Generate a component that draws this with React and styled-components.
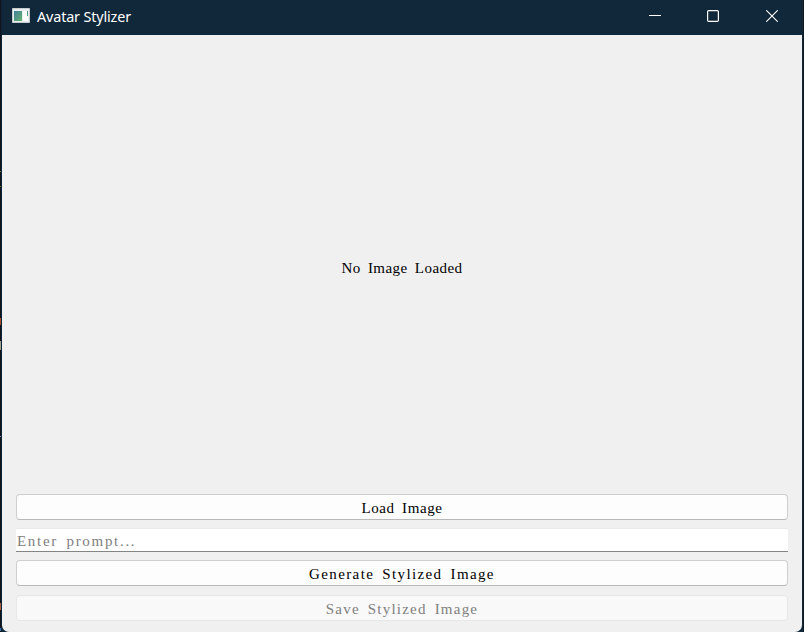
import React from "react";
import styled, { createGlobalStyle } from "styled-components";

const Global = createGlobalStyle`
  * { box-sizing: border-box; }
  html, body { margin: 0; overflow: hidden; }
  body { background: #11181f; }
`;

const Desktop = styled.div`
  position: relative;
  width: 804px;
  height: 632px;
  padding: 0 2px;
  background: linear-gradient(to right, #11151b 1px, #0c2436 1px 2px, #11283b 2px 803px, #101820 803px);
`;

const Speck = styled.i`
  position: absolute;
  left: 0;
  top: ${(p) => p.$top}px;
  width: 1px;
  height: ${(p) => p.$height}px;
  background: ${(p) => p.$color};
`;

const Window = styled.main`
  display: flex;
  flex-direction: column;
  width: 800px;
  height: 632px;
  overflow: hidden;
  background: #f0f0f0;
  border-radius: 0 0 7px 7px;
`;

const TitleBar = styled.header`
  display: flex;
  flex: none;
  align-items: center;
  height: 35px;
  padding-left: 9px;
  background: #11283b;
`;

const Title = styled.h1`
  flex: 1;
  margin: 0 0 2px 7px;
  color: #fff;
  font: 400 14.4px/20px "Noto Sans", "Open Sans", sans-serif;
  letter-spacing: -0.15px;
  white-space: nowrap;
`;

const AppIcon = styled.svg`
  display: block;
  margin-bottom: 4px;
`;

const Control = styled.button`
  display: flex;
  align-items: center;
  justify-content: center;
  width: ${(p) => p.$width || 58}px;
  height: 35px;
  padding: 0 0 3px;
  border: 0;
  background: none;
`;

const Preview = styled.section`
  display: flex;
  flex: none;
  align-items: center;
  justify-content: center;
  height: 459px;
  padding-top: 6px;
`;

const Label = styled.span`
  color: ${(p) => p.$color || "#000"};
  font: 15px/18px "Liberation Serif", serif;
  letter-spacing: ${(p) => p.$spacing}px;
  word-spacing: 3px;
  white-space: pre;
`;

const Form = styled.section`
  display: flex;
  flex-direction: column;
  padding: 0 14px;
`;

const PushButton = styled.button`
  display: flex;
  align-items: center;
  justify-content: center;
  height: 26px;
  padding: 2px 0 1px;
  margin-bottom: ${(p) => p.$gap}px;
  border: 1px solid ${(p) => (p.disabled ? "#e7e7e7" : "#cecece")};
  border-bottom-color: ${(p) => (p.disabled ? "#e7e7e7" : "#b8b8b8")};
  border-radius: 4px;
  background: ${(p) => (p.disabled ? "#f9f9f9" : "#fdfdfd")};
`;

const Prompt = styled.input`
  width: 100%;
  height: 24px;
  margin-bottom: 8px;
  padding: 3px 0 0 1px;
  border: 0 solid #e9e9e9;
  border-width: 1px 0;
  border-bottom-color: #858585;
  border-radius: 2px 2px 0 0;
  outline: 0;
  background: #fff;
  font: 15px/18px "Liberation Serif", serif;
  letter-spacing: 1.7px;
  word-spacing: 3px;
  &::placeholder { color: #808080; opacity: 1; }
`;

const specks = [
  [171, 1, "#6b8a1d"], [186, 1, "#47751d"], [318, 7, "#a94d29"],
  [341, 9, "#a2a28e"], [436, 1, "#8c89bd"], [603, 7, "#a85d3e"], [628, 3, "#3279af"],
];

export default function App() {
  return (
    <>
      <Global />
      <Desktop>
        {specks.map(([top, height, color]) => (
          <Speck key={top} $top={top} $height={height} $color={color} />
        ))}
        <Window>
          <TitleBar>
            <AppIcon width="19" height="15" viewBox="0 0 19 15">
              <defs>
                <linearGradient id="screen" x1="0" y1="0" x2="1" y2="1">
                  <stop stopColor="#417d9b" />
                  <stop offset="1" stopColor="#65b56f" />
                </linearGradient>
              </defs>
              <path fill="#e9eeee" stroke="#c6cdd0" d="M1.5.5h17v14h-17z" />
              <path fill="url(#screen)" d="M3 3h8v10H3z" />
              <path fill="#fff" d="M12 3h5v10h-5z" />
              <path fill="url(#screen)" d="M16 3h1v5h-1z" />
            </AppIcon>
            <Title>Avatar Stylizer</Title>
            <Control aria-label="Minimize">
              <svg width="12" height="12"><path d="M0 5.5h12" stroke="#fff" /></svg>
            </Control>
            <Control aria-label="Maximize">
              <svg width="12" height="12"><rect x=".6" y=".6" width="10.8" height="10.8" rx="1.2" fill="none" stroke="#fff" strokeWidth="1.2" /></svg>
            </Control>
            <Control aria-label="Close" $width={60}>
              <svg width="12" height="12"><path d="m.3.3 11.4 11.4M11.7.3.3 11.7" stroke="#fff" strokeWidth="1.1" /></svg>
            </Control>
          </TitleBar>
          <Preview><Label $spacing={0.45}>No Image Loaded</Label></Preview>
          <Form>
            <PushButton $gap={8}><Label $spacing={0.6}>Load Image</Label></PushButton>
            <Prompt placeholder="Enter prompt..." />
            <PushButton $gap={9}><Label $spacing={1.37}>Generate Stylized Image</Label></PushButton>
            <PushButton $gap={0} disabled><Label $color="#808080" $spacing={1.22}>Save Stylized Image</Label></PushButton>
          </Form>
        </Window>
      </Desktop>
    </>
  );
}
